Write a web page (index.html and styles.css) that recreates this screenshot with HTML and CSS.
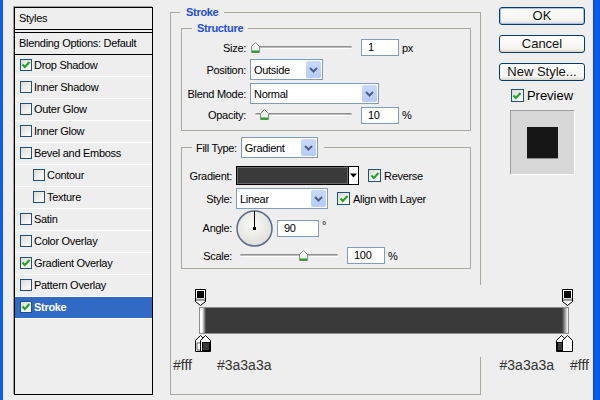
FILE: index.html
```html
<!DOCTYPE html>
<html lang="en">
<head>
  <meta charset="UTF-8">
  <title>Layer Style - Stroke</title>
  <link rel="stylesheet" href="styles.css">
</head>
<body>
  <div class="window">

    <!-- Styles list -->
    <div class="styles-panel">
      <div class="panel-title">Styles</div>
      <ul class="style-list">
        <li class="blend-row">Blending Options: Default</li>
        <li><span class="check"><svg width="10" height="10" viewBox="0 0 10 10"><path d="M1.5 4.5 L3.8 7 L8.5 2" fill="none" stroke="#21a121" stroke-width="2"/></svg></span>Drop Shadow</li>
        <li><span class="check"></span>Inner Shadow</li>
        <li><span class="check"></span>Outer Glow</li>
        <li><span class="check"></span>Inner Glow</li>
        <li><span class="check"></span>Bevel and Emboss</li>
        <li class="nested"><span class="check"></span>Contour</li>
        <li class="nested"><span class="check"></span>Texture</li>
        <li><span class="check"></span>Satin</li>
        <li><span class="check"></span>Color Overlay</li>
        <li><span class="check"><svg width="10" height="10" viewBox="0 0 10 10"><path d="M1.5 4.5 L3.8 7 L8.5 2" fill="none" stroke="#21a121" stroke-width="2"/></svg></span>Gradient Overlay</li>
        <li><span class="check"></span>Pattern Overlay</li>
        <li class="active"><span class="check"><svg width="10" height="10" viewBox="0 0 10 10"><path d="M1.5 4.5 L3.8 7 L8.5 2" fill="none" stroke="#21a121" stroke-width="2"/></svg></span>Stroke</li>
      </ul>
    </div>

    <!-- Stroke options -->
    <div class="options">
      <fieldset class="group stroke">
        <legend>Stroke</legend>

        <fieldset class="group sub structure">
          <legend>Structure</legend>
          <div class="row row-size">
            <span class="label">Size:</span>
            <div class="slider"><span class="thumb" style="left:0%"><svg width="9" height="11" viewBox="0 0 9 11"><path d="M0.5 4.5 L4.5 0.5 L8.5 4.5 V10.5 H0.5 Z" fill="#f4f4f2" stroke="#8a8a8a"/><rect x="1" y="8.5" width="7" height="2" fill="#21a121"/></svg></span></div>
            <span class="field">1</span><span class="unit">px</span>
          </div>
          <div class="row row-position">
            <span class="label">Position:</span>
            <div class="select select-position"><span>Outside</span><span class="arrow"><svg width="15" height="17" viewBox="0 0 15 17"><path d="M4 7 L7.5 10.5 L11 7" fill="none" stroke="#4d6185" stroke-width="2"/></svg></span></div>
          </div>
          <div class="row row-blend">
            <span class="label">Blend Mode:</span>
            <div class="select select-blend"><span>Normal</span><span class="arrow"><svg width="15" height="17" viewBox="0 0 15 17"><path d="M4 7 L7.5 10.5 L11 7" fill="none" stroke="#4d6185" stroke-width="2"/></svg></span></div>
          </div>
          <div class="row row-opacity">
            <span class="label">Opacity:</span>
            <div class="slider"><span class="thumb" style="left:10%"><svg width="9" height="11" viewBox="0 0 9 11"><path d="M0.5 4.5 L4.5 0.5 L8.5 4.5 V10.5 H0.5 Z" fill="#f4f4f2" stroke="#8a8a8a"/><rect x="1" y="8.5" width="7" height="2" fill="#21a121"/></svg></span></div>
            <span class="field">10</span><span class="unit">%</span>
          </div>
        </fieldset>

        <fieldset class="group sub fill">
          <legend><span class="legend-inner"><span>Fill Type:</span><span class="select select-filltype"><span>Gradient</span><span class="arrow"><svg width="15" height="17" viewBox="0 0 15 17"><path d="M4 7 L7.5 10.5 L11 7" fill="none" stroke="#4d6185" stroke-width="2"/></svg></span></span></span></legend>
          <div class="row row-gradient">
            <span class="label">Gradient:</span>
            <div class="swatch"><span class="swatch-fill"></span><span class="swatch-arrow"><svg width="7" height="5" viewBox="0 0 7 5"><path d="M0 0.5 H7 L3.5 4.5 Z" fill="#000"/></svg></span></div>
            <span class="opt"><span class="check"><svg width="10" height="10" viewBox="0 0 10 10"><path d="M1.5 4.5 L3.8 7 L8.5 2" fill="none" stroke="#21a121" stroke-width="2"/></svg></span>Reverse</span>
          </div>
          <div class="row row-style">
            <span class="label">Style:</span>
            <div class="select select-style"><span>Linear</span><span class="arrow"><svg width="15" height="17" viewBox="0 0 15 17"><path d="M4 7 L7.5 10.5 L11 7" fill="none" stroke="#4d6185" stroke-width="2"/></svg></span></div>
            <span class="opt"><span class="check"><svg width="10" height="10" viewBox="0 0 10 10"><path d="M1.5 4.5 L3.8 7 L8.5 2" fill="none" stroke="#21a121" stroke-width="2"/></svg></span>Align with Layer</span>
          </div>
          <div class="row row-angle">
            <span class="label">Angle:</span>
            <svg class="dial" width="37" height="37" viewBox="0 0 37 37">
              <defs>
                <radialGradient id="dialFill" cx="45%" cy="40%" r="60%">
                  <stop offset="0" stop-color="#fbfbfa"/>
                  <stop offset="1" stop-color="#deded9"/>
                </radialGradient>
              </defs>
              <circle cx="18.5" cy="18.5" r="17.5" fill="url(#dialFill)" stroke="#5d6b8a" stroke-width="1.5"/>
              <line x1="18.5" y1="1" x2="18.5" y2="18.5" stroke="#000" stroke-width="1"/>
              <rect x="17" y="17" width="3" height="3" fill="#000"/>
            </svg>
            <span class="field field-angle">90</span><span class="degree">°</span>
          </div>
          <div class="row row-scale">
            <span class="label">Scale:</span>
            <div class="slider slider-scale"><span class="thumb" style="left:64.3%"><svg width="9" height="11" viewBox="0 0 9 11"><path d="M0.5 4.5 L4.5 0.5 L8.5 4.5 V10.5 H0.5 Z" fill="#f4f4f2" stroke="#8a8a8a"/><rect x="1" y="8.5" width="7" height="2" fill="#21a121"/></svg></span></div>
            <span class="field">100</span><span class="unit">%</span>
          </div>
        </fieldset>

        <!-- Gradient editor strip -->
        <div class="gradient-editor">
          <div class="stop-row">
            <svg width="11" height="17" viewBox="0 0 11 17"><path d="M0.5 0.5 H10.5 V12.5 L5.5 16.5 L0.5 12.5 Z" fill="#fff" stroke="#000"/><rect x="2" y="2" width="7" height="7" fill="#000"/><rect x="1" y="9.5" width="9" height="2.5" fill="#9a9a9a"/></svg>
            <svg width="11" height="17" viewBox="0 0 11 17"><path d="M0.5 0.5 H10.5 V12.5 L5.5 16.5 L0.5 12.5 Z" fill="#fff" stroke="#000"/><rect x="2" y="2" width="7" height="7" fill="#000"/><rect x="1" y="9.5" width="9" height="2.5" fill="#9a9a9a"/></svg>
          </div>
          <div class="bar"></div>
          <div class="stop-row stop-row-bottom">
            <svg width="16" height="17" viewBox="0 0 16 17"><path d="M5.5 0.5 L10.5 5.5 V16.5 H0.5 V5.5 Z" fill="#fff" stroke="#000"/><rect x="2" y="8" width="7" height="7" fill="#fff" stroke="#000" stroke-width="0.6"/><path d="M10.5 0.5 L15.5 5.5 V16.5 H5.5 V5.5 Z" fill="#fff" stroke="#000"/><rect x="7.5" y="7.5" width="7" height="8" fill="#3a3a3a" stroke="#000"/></svg>
            <svg width="17" height="17" viewBox="0 0 17 17"><path d="M5.5 0.5 L10.5 5.5 V16.5 H0.5 V5.5 Z" fill="#fff" stroke="#000"/><rect x="1.5" y="7.5" width="7" height="8" fill="#3a3a3a" stroke="#000"/><path d="M11.5 0.5 L16.5 5.5 V16.5 H6.5 V5.5 Z" fill="#fff" stroke="#000"/><rect x="8" y="8" width="8" height="8" fill="#fff"/></svg>
          </div>
        </div>
        <div class="stop-labels">
          <span class="label-pair"><span>#fff</span><span class="second">#3a3a3a</span></span>
          <span class="label-pair right"><span>#3a3a3a</span><span class="second">#fff</span></span>
        </div>
      </fieldset>
    </div>

    <!-- Dialog buttons -->
    <div class="actions">
      <div class="btn btn-default">OK</div>
      <div class="btn">Cancel</div>
      <div class="btn">New Style...</div>
      <div class="preview-toggle"><span class="check"><svg width="10" height="10" viewBox="0 0 10 10"><path d="M1.5 4.5 L3.8 7 L8.5 2" fill="none" stroke="#21a121" stroke-width="2"/></svg></span>Preview</div>
      <div class="preview"><div class="preview-swatch"></div></div>
    </div>

  </div>
</body>
</html>
```

FILE: styles.css
```css
body {
  margin: 0;
  font: 11px "Liberation Sans", Arial, sans-serif;
  letter-spacing: -0.3px;
  color: #000;
}

.window {
  display: flex;
  align-items: flex-start;
  width: 600px;
  height: 400px;
  box-sizing: border-box;
  border-left: 3px solid #0b5cf2;
  border-right: 6px solid #0b59ee;
  box-shadow: inset -1px 0 #1b3fa8;
  background: #eeeeee;
  overflow: hidden;
}

/* Styles list on the left */
.styles-panel {
  flex: none;
  width: 139px;
  height: 388px;
  margin: 7px 0 0 11px;
  box-sizing: border-box;
  border: 1px solid #000;
  box-shadow: -1px -1px 0 #a0a0a0;
}

.panel-title {
  height: 21px;
  line-height: 20px;
  padding-left: 4px;
  border-bottom: 1px solid #000;
}

.style-list {
  list-style: none;
  margin: 2px 0 0;
  padding: 0;
  border-top: 1px solid #000;
}

.style-list li {
  display: flex;
  align-items: center;
  height: 21px;
  padding: 0 0 1px 5px;
  box-sizing: border-box;
  height: 22px;
  border-bottom: 1px solid #fff;
}

.style-list .blend-row {
  padding-left: 4px;
  border-bottom-color: #000;
}

.style-list .nested {
  padding-left: 18px;
}

.style-list .active {
  background: #316ac5;
  color: #fff;
  font-weight: bold;
}

.check {
  flex: none;
  display: flex;
  align-items: center;
  justify-content: center;
  width: 12px;
  height: 12px;
  margin-right: 2px;
  box-sizing: border-box;
  border: 1px solid #1c5180;
  background: linear-gradient(135deg, #dcdcd5, #fff);
}

.check svg {
  display: block;
}

/* Fieldsets */
.options {
  flex: none;
  margin-left: 17px;
}

.group {
  margin: 0;
  min-width: 0;
  border: 1px solid #a9a89f;
}

.group legend {
  line-height: 14px;
  font-weight: bold;
  color: #1f4fd6;
}

.stroke {
  width: 311px;
  box-sizing: border-box;
  margin-top: 5px;
  padding: 2px 10px 21px;
}

.stroke > legend {
  margin-left: -1px;
  padding: 0 6px;
}

.sub {
  width: 290px;
  box-sizing: border-box;
}

.structure {
  padding: 3px 0 6px;
}

.structure legend {
  margin-left: 10px;
  padding: 0 5px;
}

.fill {
  margin-top: 6px;
  padding: 8px 0 4px;
}

.fill legend {
  margin-left: 10px;
  padding: 0 6px 0 4px;
  font-weight: normal;
  color: #000;
}

.legend-inner {
  display: flex;
  align-items: center;
  gap: 4px;
}

/* Rows */
.row {
  display: flex;
  align-items: center;
}

.row > .label {
  flex: none;
  width: 64px;
  margin-right: 4px;
  text-align: right;
}

.fill .row > .label {
  width: 50px;
}

.row-size { height: 19px; }
.row-position { height: 21px; margin-top: 2px; }
.row-blend { height: 21px; margin-top: 3px; }
.row-opacity { height: 18px; margin-top: 2px; }

.row-gradient { height: 19px; }
.row-style { height: 21px; margin-top: 3px; }
.row-angle { height: 36px; margin-top: 1px; }
.row-scale { height: 17px; margin-top: 1px; }

/* Controls */
.select {
  flex: none;
  display: flex;
  align-items: center;
  height: 21px;
  box-sizing: border-box;
  padding: 0 1px 0 3px;
  border: 1px solid #7f9db9;
  background: #fff;
}

.select .arrow {
  display: block;
  margin-left: auto;
  width: 15px;
  height: 17px;
  border-radius: 2px;
  background: linear-gradient(#cad9fd, #b5cbf9);
}

.select .arrow svg {
  display: block;
}

.select-position { width: 73px; }
.select-blend { width: 129px; }
.select-filltype { width: 77px; }
.select-style { width: 92px; }

.field {
  flex: none;
  width: 38px;
  height: 17px;
  box-sizing: border-box;
  padding-left: 6px;
  border: 1px solid #7f9db9;
  background: #fff;
  line-height: 15px;
}

.field-angle {
  width: 42px;
  margin-left: 4px;
}

.unit {
  margin-left: 3px;
}

.degree {
  align-self: flex-start;
  margin: 9px 0 0 3px;
}

.slider {
  position: relative;
  flex: none;
  width: 97px;
  height: 12px;
  margin-left: 5px;
}

.slider::before {
  content: "";
  position: absolute;
  left: 0;
  right: 0;
  top: 4px;
  height: 3px;
  box-sizing: border-box;
  border-radius: 2px;
  border-top: 1px solid #8f8f8f;
  border-bottom: 1px solid #fff;
  background: #bdbdbd;
}

.slider-scale {
  width: 98px;
  margin-left: 4px;
}

.slider + .field {
  margin-left: 9px;
}

.thumb {
  position: absolute;
  top: 0;
  margin-left: -4.5px;
}

.thumb svg {
  display: block;
}

.swatch {
  flex: none;
  display: flex;
  width: 123px;
  height: 19px;
  box-sizing: border-box;
  border: 1px solid #000;
  background: #fff;
}

.swatch-fill {
  flex: 1;
  background: #3a3a3a;
  border-right: 1px solid #000;
  box-shadow: inset 0 0 0 1px #6a6a6a;
}

.swatch-arrow {
  display: flex;
  align-items: center;
  justify-content: center;
  width: 9px;
}

.opt {
  display: flex;
  align-items: center;
  margin-left: 9px;
}

.opt .check {
  width: 13px;
  height: 13px;
  margin-right: 3px;
}

.dial {
  flex: none;
  display: block;
}

/* Gradient editor */
.gradient-editor {
  width: 418px;
  height: 72px;
  margin: 16px 0 0 -9px;
  padding: 4px 0 0 23px;
  box-sizing: border-box;
  background: #eeeeee;
}

.stop-row {
  display: flex;
  justify-content: space-between;
  width: 378px;
  height: 17px;
}

.stop-row svg {
  display: block;
}

.stop-row-bottom {
  margin-top: 1px;
}

.bar {
  width: 370px;
  height: 27px;
  margin: 1px 0 0 4px;
  box-sizing: border-box;
  border: 1px solid #8c8c8c;
  background: linear-gradient(to right, #fff 0, #fff 2px, #3a3a3a 6px, #3a3a3a calc(100% - 6px), #fff 100%);
}

.stop-labels {
  display: flex;
  justify-content: space-between;
  width: 416px;
  margin-left: -8px;
  font-size: 14px;
  line-height: 16px;
  letter-spacing: 0;
  color: #333;
}

.label-pair .second {
  margin-left: 25px;
}

.label-pair.right .second {
  margin-left: 16px;
}

/* Right column */
.actions {
  flex: none;
  display: flex;
  flex-direction: column;
  align-items: center;
  width: 86px;
  margin: 7px 0 0 18px;
  letter-spacing: 0;
}

.btn {
  width: 86px;
  height: 18px;
  box-sizing: border-box;
  border: 1px solid #003c74;
  border-radius: 3px;
  background: linear-gradient(#ffffff, #f3f3ef 80%, #d8d4ca);
  font-size: 13px;
  line-height: 16px;
  text-align: center;
  color: #111;
}

.btn + .btn {
  margin-top: 10px;
}

.btn-default {
  box-shadow: inset 0 0 0 1px #a9c0f0;
}

.preview-toggle {
  display: flex;
  align-items: center;
  height: 13px;
  margin-top: 8px;
  font-size: 13px;
}

.preview-toggle .check {
  width: 13px;
  height: 13px;
  margin-right: 3px;
}

.preview {
  display: flex;
  align-items: center;
  justify-content: center;
  width: 65px;
  height: 65px;
  margin-top: 8px;
  box-sizing: border-box;
  border: 1px solid;
  border-color: #a0a0a0 #fff #fff #a0a0a0;
  background: #d7d7d7;
}

.preview-swatch {
  width: 31px;
  height: 31px;
  background: #161616;
  box-shadow: 0 1px 0 #8d8d8d;
}
```
